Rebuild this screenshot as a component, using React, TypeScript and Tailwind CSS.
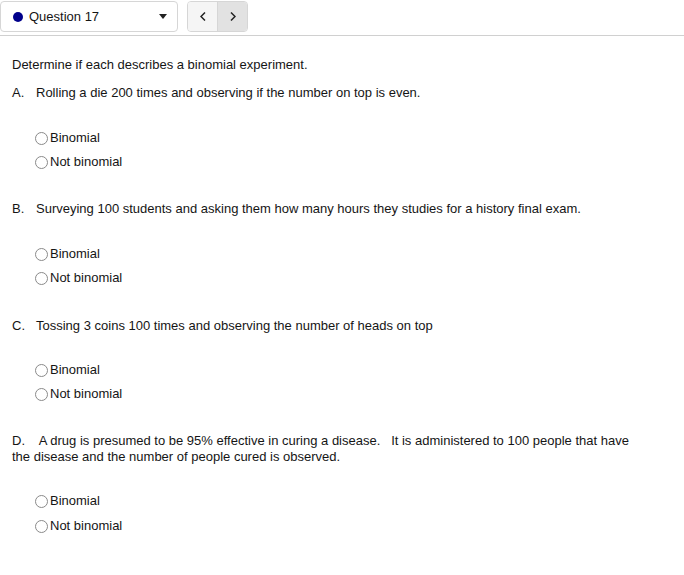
import React from "react";

function Radio({ label }: { label: string }) {
  return (
    <div className="flex items-center h-[24px]">
      <span className="inline-block w-[13px] h-[13px] rounded-full border border-[#8a8a8a] bg-white mr-[2px]" />
      <span>{label}</span>
    </div>
  );
}

function Options({ pt }: { pt: string }) {
  return (
    <div className={`pl-[23px] ${pt}`}>
      <Radio label="Binomial" />
      <Radio label="Not binomial" />
    </div>
  );
}

function Part({ letter, children, pt }: { letter: string; children: React.ReactNode; pt?: string }) {
  return (
    <div>
      <div className="flex leading-[16px]">
        <span className="w-[24px] shrink-0">{letter}</span>
        <span>{children}</span>
      </div>
      <Options pt={pt ?? "pt-[25px]"} />
    </div>
  );
}

export default function App() {
  return (
    <div className="w-[684px] h-[575px] bg-white text-[#151515] text-[13px]" style={{ fontFamily: "'Liberation Sans', sans-serif" }}>
      <div className="flex items-center h-[36px] border-b border-[#d0d0d0] pb-[3px] pt-[1px]">
        <div className="w-[178px] h-[31px] border border-[#d6d6d6] rounded-[4px] flex items-center pl-[12px] pr-[10px]">
          <span className="w-[10px] h-[10px] rounded-full bg-[#00008b] mr-[6px]" />
          <span className="flex-1">Question 17</span>
          <svg width="8" height="5" viewBox="0 0 8 5"><path d="M0 0h8L4 5z" fill="#222" /></svg>
        </div>
        <div className="ml-[9px] flex h-[31px] border border-[#d6d6d6] rounded-[4px] overflow-hidden">
          <div className="w-[30px] bg-[#f5f5f5] flex items-center justify-center border-r border-[#d6d6d6]">
            <svg width="6" height="9" viewBox="0 0 6 9"><path d="M5 0.5L1 4.5L5 8.5" fill="none" stroke="#222" strokeWidth="1.5" /></svg>
          </div>
          <div className="w-[29px] bg-[#e2e2e2] flex items-center justify-center">
            <svg width="6" height="9" viewBox="0 0 6 9"><path d="M1 0.5L5 4.5L1 8.5" fill="none" stroke="#222" strokeWidth="1.5" /></svg>
          </div>
        </div>
      </div>
      <div className="pl-[12px] pt-[21px]">
        <div className="leading-[16px]">Determine if each describes a binomial experiment.</div>
        <div className="mt-[12px]">
          <Part letter="A.">Rolling a die 200 times and observing if the number on top is even.</Part>
        </div>
        <div className="mt-[27px]">
          <Part letter="B.">Surveying 100 students and asking them how many hours they studies for a history final exam.</Part>
        </div>
        <div className="mt-[28px]">
          <Part letter="C." pt="pt-[24px]">Tossing 3 coins 100 times and observing the number of heads on top</Part>
        </div>
        <div className="mt-[27px]">
          <p className="leading-[16px] pr-[36px]">
            D.&nbsp;&nbsp;&nbsp; A drug is presumed to be 95% effective in curing a disease.&nbsp;&nbsp; It is administered to 100 people that have the disease and the number of people cured is observed.
          </p>
          <div className="pl-[23px] pt-[24px]">
            <Radio label="Binomial" />
            <div className="h-[1px]" />
            <Radio label="Not binomial" />
          </div>
        </div>
      </div>
    </div>
  );
}
